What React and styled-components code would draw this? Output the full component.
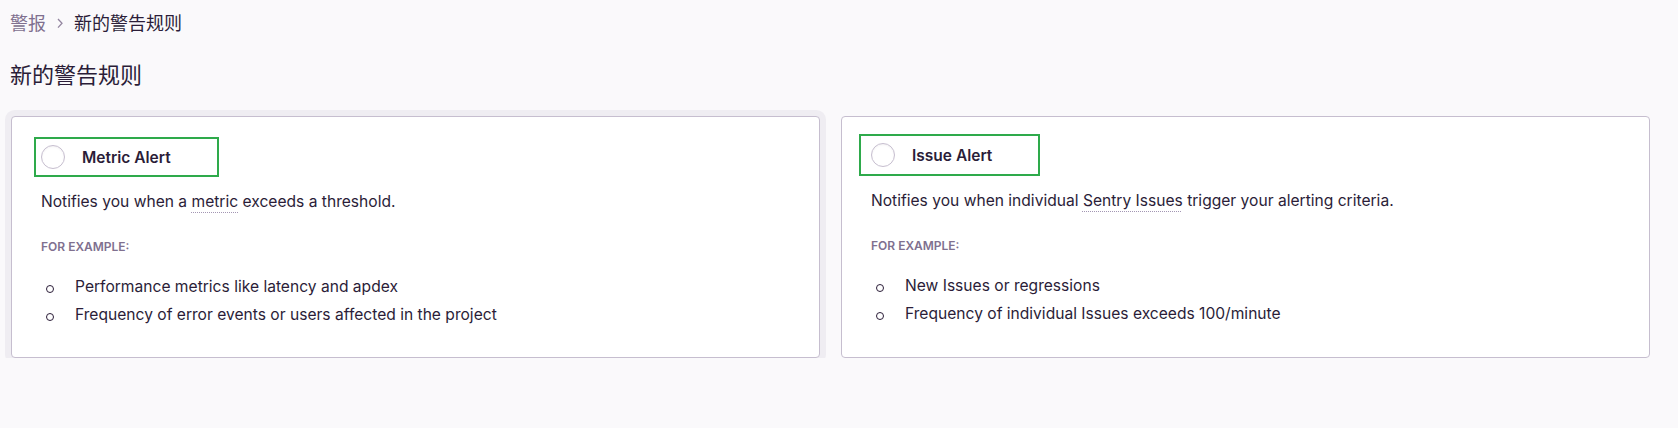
import React from "react";
import styled, { createGlobalStyle } from "styled-components";

const GlobalStyle = createGlobalStyle`
  * {
    box-sizing: border-box;
  }
  body {
    margin: 0;
    background: #faf9fb;
    font-family: Inter, "Noto Sans CJK SC", sans-serif;
    color: #2b1d38;
  }
`;

const alertTypes = [
  {
    key: "metric",
    title: "Metric Alert",
    lead: "Notifies you when a ",
    term: "metric",
    tail: " exceeds a threshold.",
    examples: [
      "Performance metrics like latency and apdex",
      "Frequency of error events or users affected in the project",
    ],
    selected: true,
    box: { left: 5, top: 20, height: 40 },
  },
  {
    key: "issue",
    title: "Issue Alert",
    lead: "Notifies you when individual ",
    term: "Sentry Issues",
    tail: " trigger your alerting criteria.",
    examples: [
      "New Issues or regressions",
      "Frequency of individual Issues exceeds 100/minute",
    ],
    selected: false,
    box: { left: 10, top: 17, height: 42 },
  },
];

export default function App() {
  return (
    <>
      <GlobalStyle />
      <Page>
        <Breadcrumbs>
          <Crumb>警报</Crumb>
          <Chevron viewBox="0 0 12 12">
            <path d="M4 2l4 4.3L4 10.6" />
          </Chevron>
          <Crumb $current>新的警告规则</Crumb>
        </Breadcrumbs>
        <Title>新的警告规则</Title>
        <Options>
          {alertTypes.map((type) => (
            <Card key={type.key} $focused={type.selected}>
              <Header
                $left={type.box.left}
                $top={type.box.top}
                $height={type.box.height}
              >
                <Radio />
                <Label>{type.title}</Label>
              </Header>
              <Description>
                {type.lead}
                <Term>{type.term}</Term>
                {type.tail}
              </Description>
              <ExampleHeading>For Example:</ExampleHeading>
              <Examples>
                {type.examples.map((example) => (
                  <li key={example}>{example}</li>
                ))}
              </Examples>
            </Card>
          ))}
        </Options>
      </Page>
    </>
  );
}

const Page = styled.div`
  padding: 0 28px 0 10px;
`;

const Breadcrumbs = styled.nav`
  display: flex;
  align-items: center;
  height: 44px;
`;

const Crumb = styled.span`
  font-size: 18px;
  color: ${(p) => (p.$current ? "#2b1d38" : "#80708f")};
`;

const Chevron = styled.svg`
  width: 12px;
  height: 12px;
  margin: 1px 8px 0 8px;
  fill: none;
  stroke: #9386a0;
  stroke-width: 1.3;
`;

const Title = styled.h1`
  margin: 0;
  height: 58px;
  display: flex;
  align-items: center;
  font-size: 22px;
  font-weight: 400;
  color: #2b1d38;
`;

const Options = styled.div`
  display: grid;
  grid-template-columns: 1fr 1fr;
  gap: 21px;
  margin-top: 14px;
  padding-left: 1px;
`;

const Card = styled.div`
  background: #fff;
  border: 1px solid #c6becf;
  border-radius: 4px;
  padding: 0 28px 28px 29px;
  box-shadow: ${(p) => (p.$focused ? "0 0 0 6px #efedf2" : "none")};
`;

const Header = styled.div`
  display: inline-flex;
  align-items: center;
  gap: 17px;
  height: ${(p) => p.$height}px;
  margin: ${(p) => p.$top}px 0 0 ${(p) => -(p.$left + 2)}px;
  padding: 0 46px 0 ${(p) => p.$left}px;
  border: 2px solid #2eaa4b;
`;

const Radio = styled.span`
  width: 24px;
  height: 24px;
  border-radius: 50%;
  border: 1px solid #c6becf;
  background: #fff;
  box-shadow: inset 0 1px 2px rgba(43, 29, 56, 0.06);
`;

const Label = styled.span`
  font-size: 15.5px;
  font-weight: 600;
  color: #2b1d38;
`;

const Description = styled.p`
  margin: 13px 0 0;
  font-size: 15.6px;
  line-height: 24px;
  color: #2b1d38;
`;

const Term = styled.span`
  text-decoration: underline dotted #a396b3;
  text-decoration-thickness: 1px;
  text-underline-offset: 5px;
`;

const ExampleHeading = styled.div`
  margin-top: 25px;
  font-size: 12px;
  line-height: 16px;
  font-weight: 600;
  text-transform: uppercase;
  color: #80708f;
`;

const Examples = styled.ul`
  list-style: none;
  margin: 18px 0 0;
  padding: 0;

  li {
    position: relative;
    padding-left: 34px;
    font-size: 15.6px;
    line-height: 28px;
    color: #2b1d38;
  }

  li::before {
    content: "";
    position: absolute;
    left: 5px;
    top: 12px;
    width: 6px;
    height: 6px;
    border: 1px solid #2b1d38;
    border-radius: 50%;
  }
`;
